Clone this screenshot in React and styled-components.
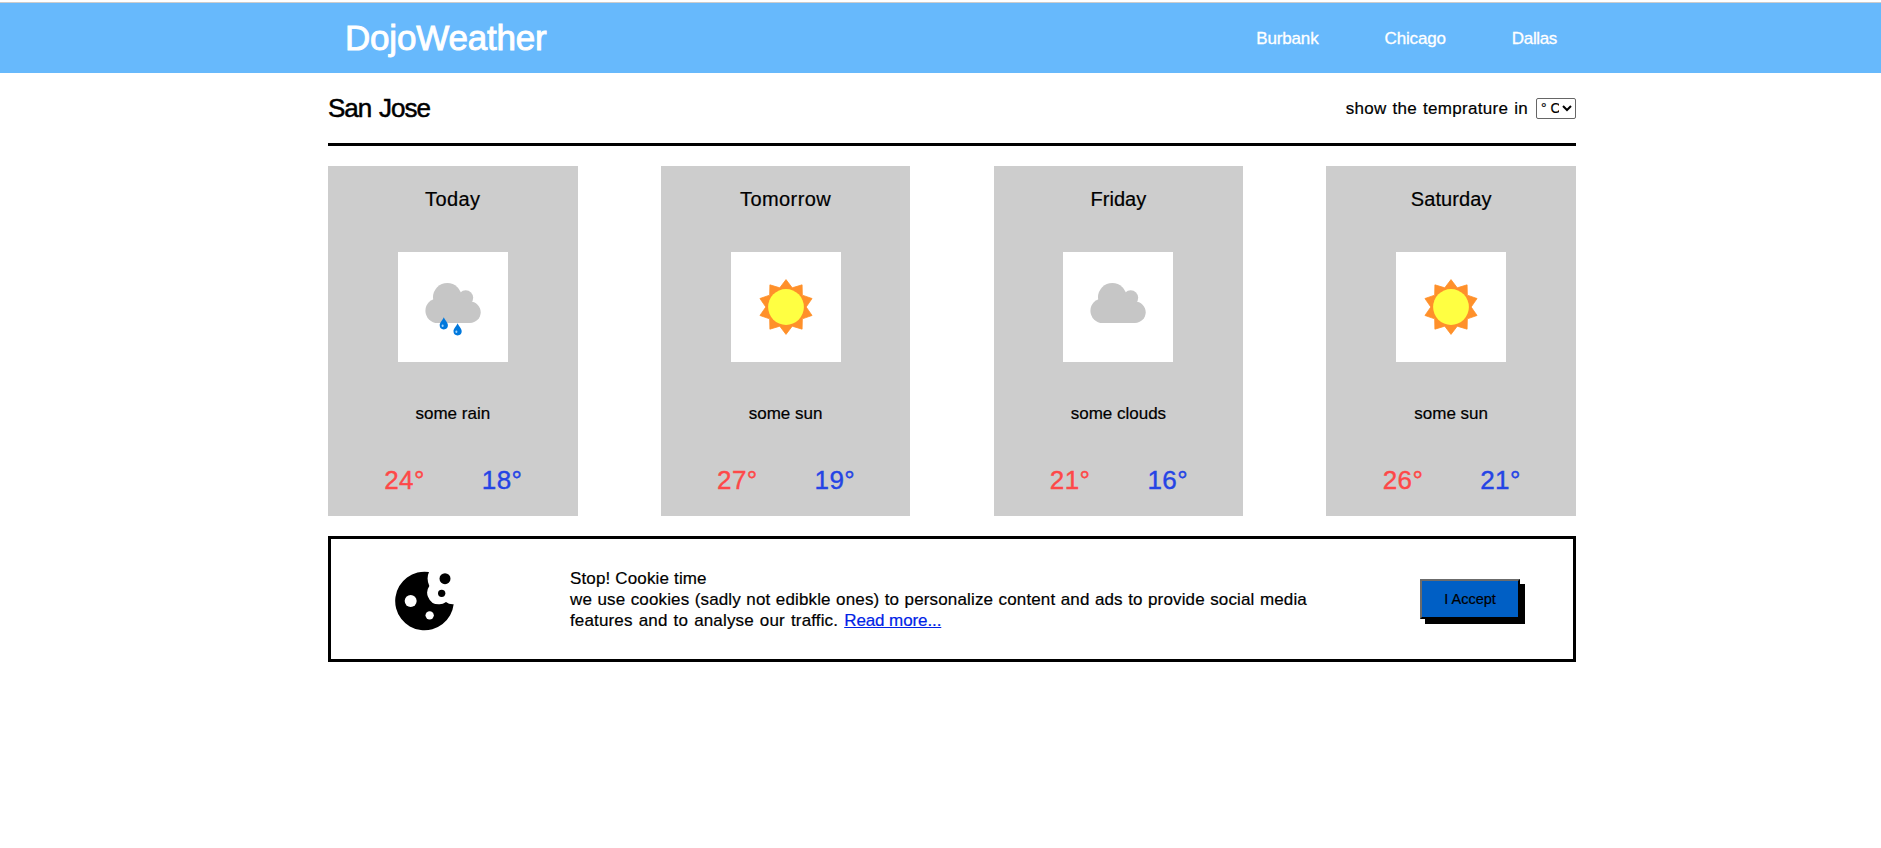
import React from "react";
import styled, { createGlobalStyle } from "styled-components";

const GlobalStyle = createGlobalStyle`
  * { box-sizing: border-box; margin: 0; padding: 0; }
  body {
    background: #fff;
    color: #000;
    font-family: "Liberation Sans", Arial, sans-serif;
    font-size: 17px;
    line-height: 21px;
    -webkit-text-stroke: 0.2px currentColor;
  }
`;

const Page = styled.div`
  padding-top: 2px;
`;

const Header = styled.header`
  height: 71px;
  border-top: 1px solid #ccc;
  background: #67b9fc;
  color: #fff;
`;

const Container = styled.div`
  width: 1248px;
  margin-left: 328px;
`;

const HeaderRow = styled(Container)`
  display: flex;
  align-items: center;
  justify-content: space-between;
  height: 70px;
  padding: 0 19px 0 17px;
`;

const Logo = styled.h1`
  font-size: 35px;
  font-weight: 400;
  line-height: 40px;
  letter-spacing: -0.2px;
  -webkit-text-stroke: 0.9px currentColor;
`;

const Nav = styled.nav`
  display: flex;
  gap: 66px;
`;

const NavLink = styled.a`
  color: inherit;
  letter-spacing: ${(p) => p.$tracking || "-0.15px"};
  -webkit-text-stroke: 0.3px currentColor;
`;

const CityBar = styled.section`
  display: flex;
  align-items: center;
  justify-content: space-between;
  height: 73px;
  border-bottom: 3px solid #000;
`;

const City = styled.h2`
  font-size: 26px;
  font-weight: 400;
  line-height: 30px;
  letter-spacing: -1px;
  word-spacing: 1.5px;
  -webkit-text-stroke: 0.5px currentColor;
`;

const UnitPicker = styled.label`
  display: flex;
  align-items: center;
  gap: 8px;
  letter-spacing: 0.3px;
  word-spacing: 0.9px;
`;

const UnitSelect = styled.select`
  width: 40px;
  height: 21px;
  border: 1px solid #666;
  border-radius: 2px;
  background: #fff;
  color: #000;
  font: 14px "Liberation Sans", Arial, sans-serif;
`;

const Forecast = styled.section`
  display: flex;
  justify-content: space-between;
  margin: 20px 0;
`;

const Card = styled.article`
  display: flex;
  flex-direction: column;
  align-items: center;
  width: 20%;
  height: 350px;
  padding-top: 21px;
  background: #cdcdcd;
`;

const Day = styled.h3`
  font-size: 20px;
  font-weight: 400;
  line-height: 24px;
  letter-spacing: ${(p) => p.$tracking || "0"};
`;

const Tile = styled.div`
  width: 110px;
  height: 110px;
  margin-top: 41px;
  background: #fff;
`;

const Summary = styled.p`
  margin-top: 41px;
`;

const Temps = styled.div`
  display: flex;
  gap: 57px;
  margin-top: 39px;
  padding-left: 1px;
  font-size: 26px;
  line-height: 34px;
`;

const Temp = styled.span`
  color: ${(p) => (p.$high ? "#fe4848" : "#2544e5")};
  letter-spacing: 0.4px;
  -webkit-text-stroke: 0.4px currentColor;
`;

const CookieBox = styled.section`
  display: flex;
  align-items: center;
  justify-content: space-between;
  height: 126px;
  padding: 0 53px 0 64px;
  border: 3px solid #000;
`;

const CookieArt = styled.svg`
  margin-top: 3px;
`;

const Message = styled.div`
  flex: 1;
  margin-left: 116px;
  letter-spacing: 0.15px;
`;

const Line = styled.p`
  word-spacing: ${(p) => p.$words || "0"};
`;

const ReadMore = styled.a`
  color: #0022e6;
  text-decoration: underline;
  letter-spacing: -0.1px;
  word-spacing: 0;
`;

const Accept = styled.button`
  width: 100px;
  height: 40px;
  border: 2px outset #767676;
  border-color: #6b6b6b #222 #222 #6b6b6b;
  background: #005fc5;
  box-shadow: 5px 5px 0 #000;
  color: #000;
  font: 14.5px "Liberation Sans", Arial, sans-serif;
`;

function Cloud() {
  return (
    <g fill="#c6c6c6">
      <circle cx="49.3" cy="45.3" r="14.3" />
      <circle cx="39.7" cy="58.7" r="12.3" />
      <circle cx="72" cy="60.3" r="10.7" />
      <circle cx="67.7" cy="45.7" r="7.5" />
      <path d="M39.7 45H63L72 50V71H39.7Z" />
    </g>
  );
}

function Drop({ x, y }) {
  return (
    <g transform={`translate(${x} ${y})`}>
      <path d="M0 0C1 3 4.1 5 4.1 8A4.1 4.1 0 0 1-4.1 8C-4.1 5-1 3 0 0Z" fill="#0078dc" />
      <ellipse cx="-1.2" cy="8.4" rx="1" ry="1.3" fill="#9fd4ff" />
    </g>
  );
}

const sunPoints = Array.from({ length: 20 }, (_, i) => {
  const r = i % 2 ? 20.2 : 27.4;
  const a = (i * Math.PI) / 10;
  return `${55 + r * Math.sin(a)},${55 - r * Math.cos(a)}`;
}).join(" ");

function Sun() {
  return (
    <g>
      <polygon points={sunPoints} fill="#ff902a" stroke="#ff902a" strokeWidth="0.8" strokeLinejoin="round" />
      <circle cx="55" cy="55" r="17.9" fill="#ffff42" />
    </g>
  );
}

function WeatherIcon({ kind }) {
  return (
    <svg width="110" height="110" viewBox="0 0 110 110" display="block">
      {kind === "sun" ? <Sun /> : <Cloud />}
      {kind === "rain" && (
        <>
          <Drop x={45.8} y={65.3} />
          <Drop x={59.6} y={71.3} />
        </>
      )}
    </svg>
  );
}

function CookieIcon() {
  return (
    <CookieArt width="59" height="60" viewBox="225 137 177 180">
      <path
        d="M327 140Q318 160 328 182Q317 198 324 214Q333 237 356 237Q368 238 378 230Q387 238 401 237A88 88 0 1 1 327 140Z"
        fill="#000"
      />
      <circle cx="375" cy="160" r="16.5" />
      <circle cx="365" cy="204" r="11" />
      <circle cx="272" cy="227" r="18" fill="#fff" />
      <circle cx="329" cy="270" r="12.5" fill="#fff" />
    </CookieArt>
  );
}

const cities = [
  { name: "Burbank" },
  { name: "Chicago" },
  { name: "Dallas", tracking: "-0.35px" },
];

const days = [
  { day: "Today", kind: "rain", text: "some rain", high: 24, low: 18, tracking: "0.4px" },
  { day: "Tomorrow", kind: "sun", text: "some sun", high: 27, low: 19, tracking: "0.4px" },
  { day: "Friday", kind: "cloud", text: "some clouds", high: 21, low: 16 },
  { day: "Saturday", kind: "sun", text: "some sun", high: 26, low: 21, tracking: "0.1px" },
];

export default function App() {
  return (
    <Page>
      <GlobalStyle />
      <Header>
        <HeaderRow>
          <Logo>DojoWeather</Logo>
          <Nav>
            {cities.map((c) => (
              <NavLink key={c.name} $tracking={c.tracking}>{c.name}</NavLink>
            ))}
          </Nav>
        </HeaderRow>
      </Header>
      <Container as="main">
        <CityBar>
          <City>San Jose</City>
          <UnitPicker>
            show the temprature in
            <UnitSelect>
              <option>° C</option>
              <option>° F</option>
            </UnitSelect>
          </UnitPicker>
        </CityBar>
        <Forecast>
          {days.map((d) => (
            <Card key={d.day}>
              <Day $tracking={d.tracking}>{d.day}</Day>
              <Tile><WeatherIcon kind={d.kind} /></Tile>
              <Summary>{d.text}</Summary>
              <Temps>
                <Temp $high>{d.high}°</Temp>
                <Temp>{d.low}°</Temp>
              </Temps>
            </Card>
          ))}
        </Forecast>
        <CookieBox>
          <CookieIcon />
          <Message>
            <Line>Stop! Cookie time</Line>
            <Line $words="0.5px">
              we use cookies (sadly not edibkle ones) to personalize content and ads to provide social media
            </Line>
            <Line $words="1.2px">
              features and to analyse our traffic. <ReadMore href="#">Read more...</ReadMore>
            </Line>
          </Message>
          <Accept>I Accept</Accept>
        </CookieBox>
      </Container>
    </Page>
  );
}
